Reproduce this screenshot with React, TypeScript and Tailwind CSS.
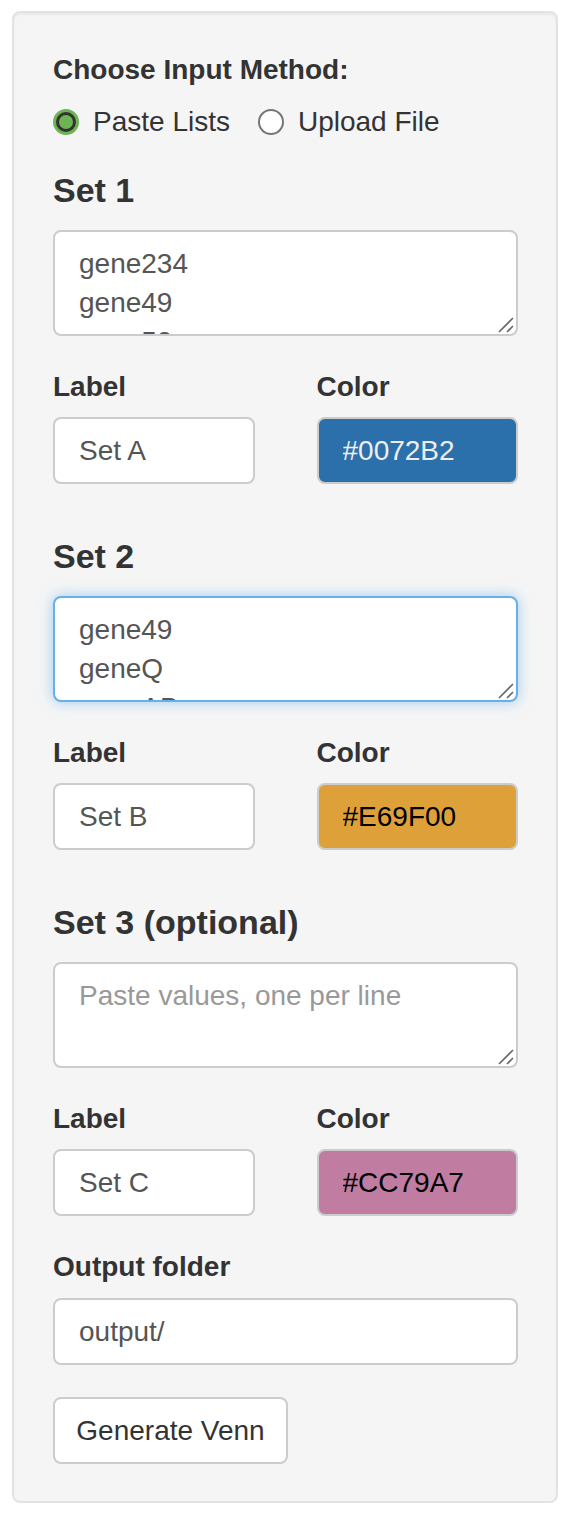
import { useState } from "react";

const font = { fontFamily: '"Liberation Sans", Arial, sans-serif' };

type SetProps = {
  title: string;
  values: string;
  label: string;
  color: string;
  colorText: string;
  bg: string;
  focused?: boolean;
  first?: boolean;
};

function RadioDot({ checked }: { checked: boolean }) {
  return checked ? (
    <svg width="26" height="26" viewBox="0 0 26 26">
      <circle cx="13" cy="13" r="13" fill="#6cb552" />
      <circle cx="13" cy="13" r="8.5" fill="#6cb552" stroke="#333" strokeWidth="3" />
    </svg>
  ) : (
    <svg width="26" height="26" viewBox="0 0 26 26">
      <circle cx="13" cy="13" r="12" fill="#fff" stroke="#767676" strokeWidth="2" />
    </svg>
  );
}

// resize grip, drawn at 2x like the screenshot
function Grip() {
  return (
    <svg
      className="pointer-events-none absolute right-[3px] bottom-[3px]"
      width="18"
      height="18"
      viewBox="0 0 18 18"
    >
      <path d="M2 17 L16 3" stroke="#666" strokeWidth="1.6" />
      <path d="M10 17 L16 11" stroke="#666" strokeWidth="1.6" />
    </svg>
  );
}

function SetBlock({ title, values, label, color, colorText, bg, focused, first }: SetProps) {
  const [text, setText] = useState(values);
  const [name, setName] = useState(label);

  return (
    <div className="flex flex-col">
      <h4
        className={`${first ? "mt-[28px]" : "mt-[52px]"} h-[40px] text-[34px] leading-[40px] font-bold text-[#333]`}
      >
        {title}
      </h4>
      <div className="relative mt-[20px]">
        <textarea
          value={text}
          onChange={(e) => setText(e.target.value)}
          placeholder="Paste values, one per line"
          className={`block h-[106px] w-full resize-none rounded-[8px] border-2 bg-white px-[24px] pt-[12px] pb-[10px] text-[28px] leading-[39px] text-[#555] placeholder:text-[#999] outline-none overflow-hidden ${
            focused
              ? "border-[#66afe9] shadow-[0_0_14px_rgba(102,175,233,0.6)]"
              : "border-[#cccccc]"
          }`}
          style={font}
        />
        <Grip />
      </div>
      <div className="mt-[31px] grid grid-cols-2 gap-x-[62px]">
        <div className="flex flex-col">
          <label className="h-[40px] text-[28px] leading-[40px] font-bold text-[#333]">Label</label>
          <input
            value={name}
            onChange={(e) => setName(e.target.value)}
            className="mt-[10px] h-[67px] w-full rounded-[8px] border-2 border-[#cccccc] bg-white px-[24px] text-[28px] text-[#555] outline-none"
            style={font}
          />
        </div>
        <div className="flex flex-col">
          <label className="h-[40px] text-[28px] leading-[40px] font-bold text-[#333]">Color</label>
          <input
            readOnly
            value={color}
            className={`mt-[10px] h-[67px] w-full rounded-[8px] border-2 border-[#cccccc] px-[24px] text-[28px] outline-none ${bg} ${colorText}`}
            style={font}
          />
        </div>
      </div>
    </div>
  );
}

export default function App() {
  const [method, setMethod] = useState("paste");
  const [folder, setFolder] = useState("output/");

  return (
    <div className="min-h-screen bg-white pt-[11px] pl-[12px]" style={font}>
      <div className="w-[546px] rounded-[8px] border-2 border-[#e3e3e3] bg-[#f5f5f5] pt-[37px] pb-[37px] pl-[39px] pr-[38px] shadow-[inset_0_2px_2px_rgba(0,0,0,0.05)]">
        <div className="flex w-[465px] flex-col">
          <label className="h-[40px] text-[28px] leading-[40px] font-bold text-[#333]">
            Choose Input Method:
          </label>
          <div className="mt-[12px] flex h-[40px] items-center text-[28px] text-[#333]">
            <button className="flex items-center" onClick={() => setMethod("paste")}>
              <RadioDot checked={method === "paste"} />
              <span className="ml-[14px]">Paste Lists</span>
            </button>
            <button className="ml-[28px] flex items-center" onClick={() => setMethod("upload")}>
              <RadioDot checked={method === "upload"} />
              <span className="ml-[14px]">Upload File</span>
            </button>
          </div>

          <SetBlock
            first
            title="Set 1"
            values={"gene234\ngene49\ngene50\ngene7"}
            label="Set A"
            color="#0072B2"
            bg="bg-[#2c70ab]"
            colorText="text-[#eeeeee]"
          />
          <SetBlock
            focused
            title="Set 2"
            values={"gene49\ngeneQ\ngeneAB\ngene7"}
            label="Set B"
            color="#E69F00"
            bg="bg-[#dea139]"
            colorText="text-black"
          />
          <SetBlock
            title="Set 3 (optional)"
            values=""
            label="Set C"
            color="#CC79A7"
            bg="bg-[#c17da1]"
            colorText="text-black"
          />

          <label className="mt-[31px] h-[40px] text-[28px] leading-[40px] font-bold text-[#333]">
            Output folder
          </label>
          <input
            value={folder}
            onChange={(e) => setFolder(e.target.value)}
            className="mt-[11px] h-[67px] w-full rounded-[8px] border-2 border-[#cccccc] bg-white px-[24px] text-[28px] text-[#555] outline-none"
            style={font}
          />
          <div className="mt-[32px]">
            <button className="h-[67px] w-[235px] rounded-[8px] border-2 border-[#cccccc] bg-white text-[28px] text-[#333]">
              Generate Venn
            </button>
          </div>
        </div>
      </div>
    </div>
  );
}
